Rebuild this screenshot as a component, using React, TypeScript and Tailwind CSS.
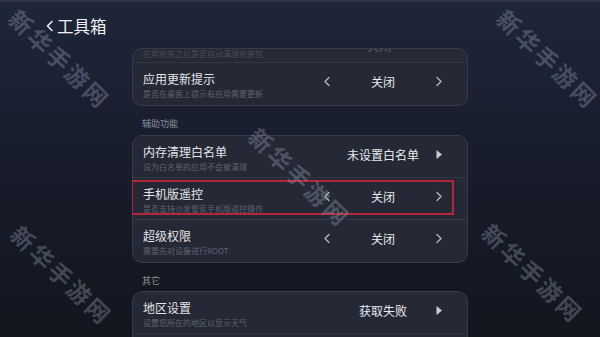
import React from "react";

const FONT = { fontFamily: '"Noto Sans CJK SC", "Noto Sans", sans-serif' };

function ChevL() {
  return (
    <svg width="8" height="11" viewBox="0 0 8 11" fill="none">
      <path d="M6 1.5 L2 5.5 L6 9.5" stroke="#b4b8c2" strokeWidth="1.3" strokeLinecap="round" strokeLinejoin="round" />
    </svg>
  );
}
function ChevR() {
  return (
    <svg width="8" height="11" viewBox="0 0 8 11" fill="none">
      <path d="M2 1.5 L6 5.5 L2 9.5" stroke="#b4b8c2" strokeWidth="1.3" strokeLinecap="round" strokeLinejoin="round" />
    </svg>
  );
}
function Tri() {
  return (
    <svg width="8" height="11" viewBox="0 0 8 11">
      <path d="M1.5 1 L7 5.5 L1.5 10 Z" fill="#c9ccd3" />
    </svg>
  );
}

type RowProps = {
  title: string;
  sub: string;
  value: string;
  mode: "toggle" | "arrow";
  last?: boolean;
  highlight?: boolean;
};

function Row({ title, sub, value, mode, last, highlight }: RowProps) {
  return (
    <div className="relative flex h-[42px] items-center">
      <div className="flex flex-1 flex-col pl-[10px]">
        <div className="text-[12px] leading-[18px] text-[#e4e5e9]">{title}</div>
        <div className="text-[8px] leading-[11px] text-[#5e6371]">{sub}</div>
      </div>
      <div className="mr-[20px] grid w-[128px] grid-cols-[16px_1fr_16px] items-center pb-[5px]">
        <div className="flex justify-center">{mode === "toggle" ? <ChevL /> : null}</div>
        <div className="text-center text-[12px] leading-[18px] text-[#e8e9ec]">{value}</div>
        <div className="flex justify-center">{mode === "toggle" ? <ChevR /> : <Tri />}</div>
      </div>
      {!last && <div className="absolute bottom-0 left-0 right-0 h-px bg-[#313745]" />}
      {highlight && (
        <div className="absolute left-[-2px] top-[2px] h-[35px] w-[323px] border-2 border-[#b22638]" />
      )}
    </div>
  );
}

function Watermark({ x, y }: { x: number; y: number }) {
  return (
    <div
      className="pointer-events-none absolute whitespace-nowrap text-[23px] font-bold tracking-[3px] text-[rgba(170,176,195,0.32)]"
      style={{ left: x, top: y, transform: "translate(-50%,-50%) rotate(44deg)", ...FONT }}
    >
      新华手游网
    </div>
  );
}

export default function App() {
  return (
    <div
      className="relative h-[337px] w-[600px] overflow-hidden border-t-2 border-[#2c3344] bg-[linear-gradient(to_bottom,#1e2639_0%,#181d2c_45%,#13161f_100%)]"
      style={FONT}
    >
      <div className="flex h-[46px] items-center pl-[45px] pt-[1px]">
        <svg width="9" height="12" viewBox="0 0 9 12" fill="none" className="mr-[3px]">
          <path d="M7 1.5 L2.5 6 L7 10.5" stroke="#eef0f4" strokeWidth="1.6" strokeLinecap="round" strokeLinejoin="round" />
        </svg>
        <span className="text-[16.5px] leading-[22px] text-[#eef0f4]">工具箱</span>
      </div>

      <div className="ml-[132px] w-[336px] overflow-hidden">
        {/* card 1, scrolled */}
        <div className="rounded-[10px] border border-[#363c4b] bg-[#242935]">
          <div className="relative h-[14px] overflow-hidden border-b border-[#313745]">
            <div className="absolute bottom-[3px] left-[10px] text-[8px] leading-[11px] text-[#4a4f5c]">
              应用安装之后是否自动清理安装包
            </div>
            <div className="absolute right-[76px] top-[-12px] text-[12px] leading-[18px] text-[#5c606b]">关闭</div>
          </div>
          <Row title="应用更新提示" sub="是否在桌面上提示有应用需要更新" value="关闭" mode="toggle" last />
        </div>

        <div className="mt-[11px] pl-[10px] text-[9px] leading-[14px] text-[#8b909c]">辅助功能</div>
        <div className="mt-[4px] rounded-[10px] border border-[#363c4b] bg-[#242935]">
          <Row title="内存清理白名单" sub="设为白名单的应用不会被清理" value="未设置白名单" mode="arrow" />
          <Row title="手机版遥控" sub="是否支持沙发管家手机版遥控操作" value="关闭" mode="toggle" highlight />
          <Row title="超级权限" sub="需要先对设备进行ROOT" value="关闭" mode="toggle" last />
        </div>

        <div className="mt-[11px] pl-[10px] text-[9px] leading-[14px] text-[#8b909c]">其它</div>
        <div className="mt-[3px] rounded-[10px] border border-[#363c4b] bg-[#242935]">
          <Row title="地区设置" sub="设置您所在的地区以显示天气" value="获取失败" mode="arrow" />
          <Row title="" sub="" value="" mode="arrow" last />
        </div>
      </div>

      <Watermark x={60} y={57} />
      <Watermark x={548} y={57} />
      <Watermark x={300} y={175} />
      <Watermark x={62} y={273} />
      <Watermark x={533} y={271} />
    </div>
  );
}
